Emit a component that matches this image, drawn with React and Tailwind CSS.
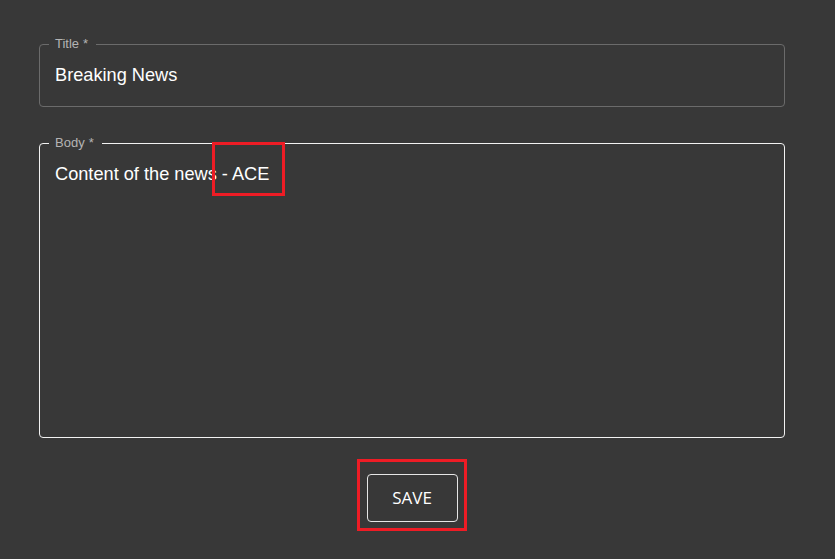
import React from "react";

export default function App() {
  return (
    <div className="relative h-[559px] w-[835px] overflow-hidden bg-[#383838] pt-[38px] font-['Liberation_Sans',Arial,sans-serif]">
      <div className="ml-[39px] flex w-[746px] flex-col">
        <fieldset className="rounded-[4px] border border-[#6b6b6b] px-[9px]">
          <legend className="pl-[6px] pr-[8px] text-[13px] leading-[12px] text-[#b4b4b4]">Title<span className="ml-[4px]">*</span></legend>
          <div className="px-[6px] pb-[20px] pt-[15px] text-[18.2px] leading-[21px] text-white">Breaking News</div>
        </fieldset>
        <fieldset className="mt-[30px] h-[301px] rounded-[4px] border border-[#f2f2f2] px-[9px]">
          <legend className="pl-[6px] pr-[8px] text-[13px] leading-[12px] text-[#b4b4b4]">Body<span className="ml-[4px]">*</span></legend>
          <div className="px-[6px] pt-[15px] text-[18.2px] leading-[21px] text-white">Content of the news - ACE</div>
        </fieldset>
        <div className="mt-[36px] flex justify-center">
          <button className="h-[48px] w-[91px] rounded-[4px] border border-[#e6e6e6] font-['Open_Sans',sans-serif] text-[17px] text-white">
            SAVE
          </button>
        </div>
      </div>
      <div className="absolute left-[212px] top-[142px] h-[54px] w-[73px] border-[3px] border-[#ee1c25]" />
      <div className="absolute left-[357px] top-[459px] h-[72px] w-[110px] border-[3px] border-[#ee1c25]" />
    </div>
  );
}
